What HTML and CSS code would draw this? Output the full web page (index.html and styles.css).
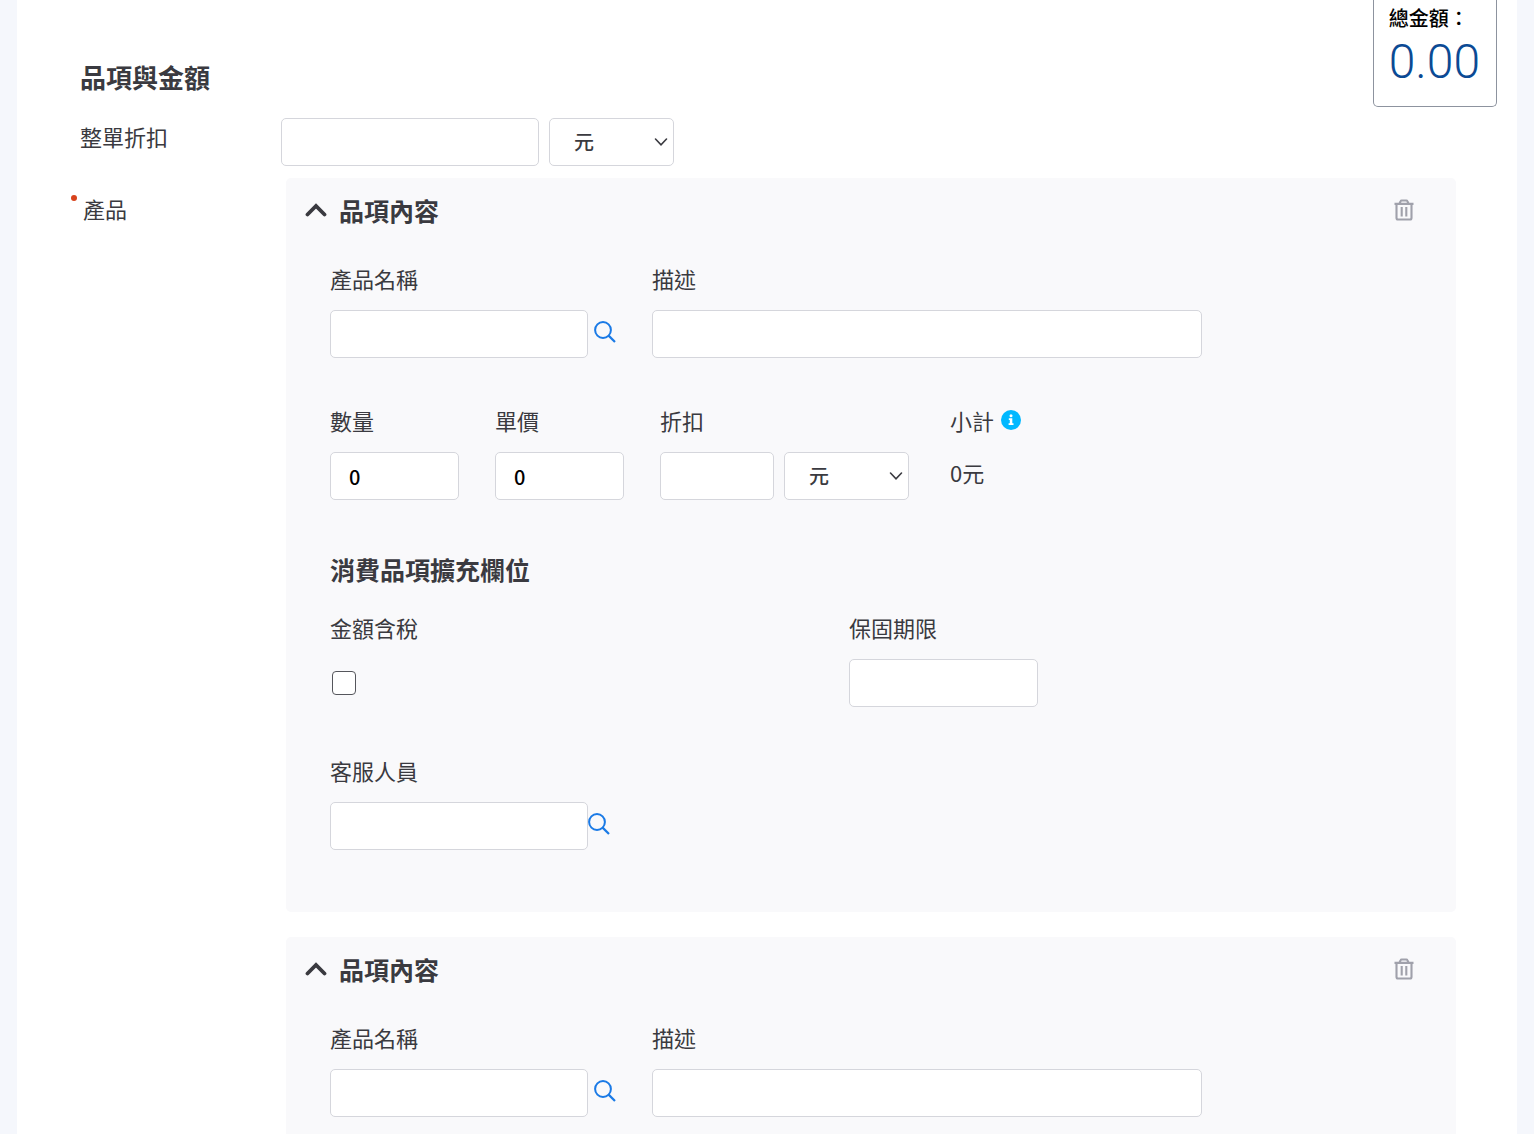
FILE: index.html
```html
<!DOCTYPE html>
<html lang="zh-Hant">
<head>
  <meta charset="utf-8">
  <meta name="viewport" content="width=device-width, initial-scale=1">
  <title>品項與金額</title>
  <link rel="stylesheet" href="styles.css">
</head>
<body>
  <svg class="sprite" aria-hidden="true">
    <symbol id="chevron-up" viewBox="0 0 22 14"><path d="M2.500 11.500 11 3l8.500 8.500" fill="none" stroke="currentColor" stroke-width="3.800" stroke-linecap="round"/></symbol>
    <symbol id="chevron-down" viewBox="0 0 14 10"><path d="M1.500 2 7 7.800 12.500 2" fill="none" stroke="currentColor" stroke-width="1.600" stroke-linecap="round"/></symbol>
    <symbol id="search" viewBox="0 0 22 22"><circle cx="9" cy="9" r="7.900" fill="none" stroke="currentColor" stroke-width="2"/><path d="m14.600 14.600 6.400 6.400" stroke="currentColor" stroke-width="2.200"/></symbol>
    <symbol id="trash" viewBox="0 0 20 22"><path d="M0.500 4.900h19M2.500 5v14q0 1.500 1.500 1.500h12q1.500 0 1.500-1.500V5M5.500 4.500 6.600 2.200q.3-.7 1-.7h4.800q.7 0 1 .7l1.100 2.300M7.700 8v9.500M12.300 8v9.500" fill="none" stroke="currentColor" stroke-width="2.100"/></symbol>
    <symbol id="info" viewBox="0 0 20 20"><circle cx="10" cy="10" r="10" fill="#00b8ff"/><circle cx="10" cy="5.800" r="1.500" fill="#fff"/><path d="M7.800 8.300h3.500v5h1.200v1.600H7.600v-1.600h1.200V9.900h-1z" fill="#fff"/></symbol>
  </svg>

  <aside class="total">
    <div class="total-label">總金額：</div>
    <output class="total-value">0.00</output>
  </aside>

  <main class="page">
    <h1 class="page-title">品項與金額</h1>
    <form class="form">
      <label class="form-label" for="order-discount">整單折扣</label>
      <div class="discount">
        <input class="input input-lg" id="order-discount" type="text">
        <div class="select-wrap">
          <select class="input select" aria-label="整單折扣單位"><option>元</option><option>%</option></select>
          <svg class="select-arrow"><use href="#chevron-down"/></svg>
        </div>
      </div>

      <div class="form-label required">產品</div>
      <div class="items">
        <section class="card">
          <header class="card-head">
            <button class="toggle" type="button"><svg class="icon-chevron"><use href="#chevron-up"/></svg>品項內容</button>
            <button class="icon-button trash" type="button" aria-label="刪除"><svg class="icon-trash"><use href="#trash"/></svg></button>
          </header>
          <div class="card-body">
            <div class="row row-product">
              <div class="field">
                <label class="label" for="name-1">產品名稱</label>
                <div class="lookup">
                  <input class="input input-lg" id="name-1" type="text">
                  <button class="icon-button search" type="button" aria-label="搜尋產品"><svg class="icon-search"><use href="#search"/></svg></button>
                </div>
              </div>
              <div class="field description">
                <label class="label" for="desc-1">描述</label>
                <input class="input" id="desc-1" type="text">
              </div>
            </div>

            <div class="row row-price">
              <div class="field amount">
                <label class="label" for="qty-1">數量</label>
                <input class="input" id="qty-1" type="text" value="0">
              </div>
              <div class="field amount">
                <label class="label" for="price-1">單價</label>
                <input class="input" id="price-1" type="text" value="0">
              </div>
              <div class="field item-discount">
                <label class="label" for="discount-1">折扣</label>
                <div class="discount">
                  <input class="input input-sm" id="discount-1" type="text">
                  <div class="select-wrap">
                    <select class="input select" aria-label="折扣單位"><option>元</option><option>%</option></select>
                    <svg class="select-arrow"><use href="#chevron-down"/></svg>
                  </div>
                </div>
              </div>
              <div class="field">
                <div class="label with-info">小計<svg class="icon-info"><use href="#info"/></svg></div>
                <output class="subtotal">0元</output>
              </div>
            </div>

            <h2 class="section-title">消費品項擴充欄位</h2>
            <div class="extra">
              <div class="field">
                <label class="label" for="tax-1">金額含稅</label>
                <div class="check-line"><input class="checkbox" id="tax-1" type="checkbox"></div>
              </div>
              <div class="field">
                <label class="label" for="warranty-1">保固期限</label>
                <input class="input input-md" id="warranty-1" type="text">
              </div>
              <div class="field">
                <label class="label" for="agent-1">客服人員</label>
                <div class="lookup tight">
                  <input class="input input-lg" id="agent-1" type="text">
                  <button class="icon-button search" type="button" aria-label="搜尋客服人員"><svg class="icon-search"><use href="#search"/></svg></button>
                </div>
              </div>
            </div>
          </div>
        </section>

        <section class="card card-last">
          <header class="card-head">
            <button class="toggle" type="button"><svg class="icon-chevron"><use href="#chevron-up"/></svg>品項內容</button>
            <button class="icon-button trash" type="button" aria-label="刪除"><svg class="icon-trash"><use href="#trash"/></svg></button>
          </header>
          <div class="card-body">
            <div class="row row-product">
              <div class="field">
                <label class="label" for="name-2">產品名稱</label>
                <div class="lookup">
                  <input class="input input-lg" id="name-2" type="text">
                  <button class="icon-button search" type="button" aria-label="搜尋產品"><svg class="icon-search"><use href="#search"/></svg></button>
                </div>
              </div>
              <div class="field description">
                <label class="label" for="desc-2">描述</label>
                <input class="input" id="desc-2" type="text">
              </div>
            </div>
          </div>
        </section>
      </div>
    </form>
  </main>
</body>
</html>
```

FILE: styles.css
```css
* {
  box-sizing: border-box;
}

body {
  margin: 0;
  background: #f5f7fc;
  color: #3a3a40;
  font-family: "Noto Sans CJK TC", sans-serif;
  font-size: 22px;
  line-height: 24px;
}

button,
input,
select {
  font: inherit;
  color: inherit;
}

.sprite {
  position: absolute;
  width: 0;
  height: 0;
}

.page {
  min-height: 100vh;
  margin: 0 17px;
  padding: 61px 61px 0 63px;
  background: #fff;
}

.page-title {
  margin: 0 0 25px;
  font-size: 26px;
  line-height: 32px;
  font-weight: 700;
}

/* Running total, pinned to the top of the window */
.total {
  position: fixed;
  z-index: 1;
  top: 0;
  right: 37px;
  padding: 6px 16px 12px 15px;
  border: 1px solid #8d939f;
  border-top: 0;
  border-radius: 0 0 5px 5px;
  background: #fff;
}

.total-label {
  color: #000;
  font-size: 20px;
  font-weight: 500;
}

.total-value {
  display: block;
  color: #0b4a94;
  font-family: Roboto, "Liberation Sans", sans-serif;
  font-size: 48px;
  font-weight: 300;
  line-height: 64px;
}

.form {
  display: grid;
  grid-template-columns: 201px minmax(0, 1fr);
  row-gap: 12px;
}

.form-label {
  line-height: 36px;
}

.required {
  position: relative;
  padding: 12px 0 0 3px;
}

.required::before {
  content: "";
  position: absolute;
  top: 17px;
  left: -9px;
  width: 6px;
  height: 6px;
  border-radius: 50%;
  background: #d8431c;
}

.items {
  display: flex;
  flex-direction: column;
  gap: 25px;
  margin-left: 5px;
}

.card {
  padding: 16px 0 62px;
  border-radius: 5px;
  background: #f9f9fb;
}

.card-last {
  padding-bottom: 17px;
  border-radius: 5px 5px 0 0;
}

.card-head {
  display: flex;
  align-items: center;
  justify-content: space-between;
  padding: 0 42px 0 19px;
}

.toggle {
  display: flex;
  align-items: center;
  gap: 12px;
  padding: 0;
  border: 0;
  background: none;
  font-size: 25px;
  font-weight: 700;
  line-height: 32px;
}

.icon-button {
  display: flex;
  padding: 0;
  border: 0;
  background: none;
}

.trash {
  color: #a0a1ab;
}

.search {
  color: #1a7ae6;
}

.icon-chevron {
  width: 22px;
  height: 14px;
}

.icon-trash {
  width: 20px;
  height: 22px;
}

.icon-search {
  width: 22px;
  height: 22px;
}

.icon-info {
  width: 20px;
  height: 20px;
}

.card-body {
  padding: 40px 88px 0 44px;
}

.row {
  display: flex;
}

.row-product {
  gap: 36px;
}

.row-price {
  gap: 36px;
  margin-top: 50px;
}

.field {
  display: flex;
  flex-direction: column;
  align-items: flex-start;
  gap: 20px;
}

.description {
  flex: 1;
  max-width: 550px;
}

.amount {
  width: 129px;
}

.item-discount {
  width: 254px;
}

.input {
  width: 100%;
  height: 48px;
  padding: 0 18px;
  border: 1px solid #d5d6dc;
  border-radius: 5px;
  background: #fff;
  color: #000;
  font-size: 20px;
  font-weight: 500;
}

.input-lg {
  width: 258px;
}

.input-md {
  width: 189px;
}

.input-sm {
  width: 114px;
}

.discount {
  display: flex;
  gap: 10px;
}

.select-wrap {
  position: relative;
  width: 125px;
}

.select {
  appearance: none;
  padding: 0 24px;
  color: #3a3a40;
}

.select-arrow {
  position: absolute;
  top: 19px;
  right: 6px;
  width: 14px;
  height: 10px;
  color: #3a3a40;
  pointer-events: none;
}

.lookup {
  display: flex;
  align-items: center;
  gap: 6px;
}

.lookup .search {
  margin-bottom: 4px;
}

.tight {
  gap: 0;
}

.with-info {
  display: flex;
  align-items: center;
  gap: 7px;
}

.subtotal {
  line-height: 40px;
}

.section-title {
  margin: 53px 0 30px;
  font-size: 25px;
  font-weight: 700;
  line-height: 32px;
}

.extra {
  display: grid;
  grid-template-columns: 1fr 1fr;
  row-gap: 51px;
}

.check-line {
  display: flex;
  align-items: center;
  height: 48px;
}

.checkbox {
  appearance: none;
  width: 24px;
  height: 24px;
  margin: 0 2px;
  border: 1px solid #55565c;
  border-radius: 4px;
  background: #fff;
}

.checkbox:checked {
  background: #1a7ae6;
}
```
